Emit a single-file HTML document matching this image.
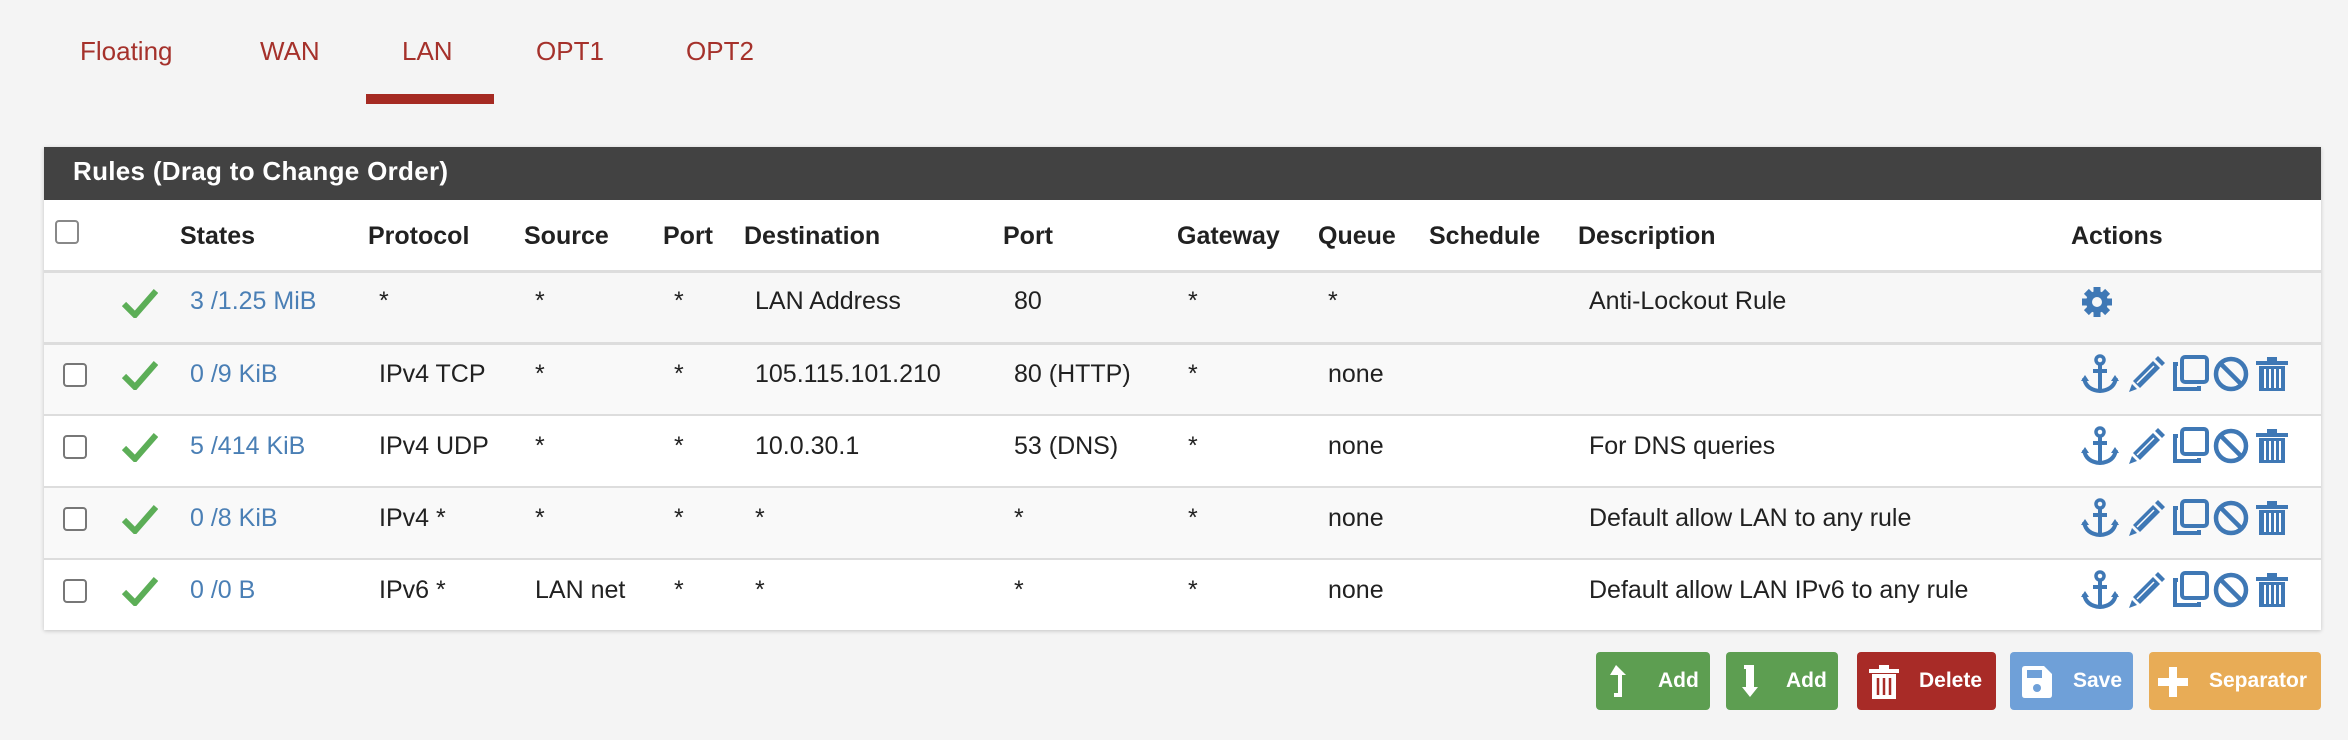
<!DOCTYPE html>
<html><head><meta charset="utf-8"><style>
*{margin:0;padding:0;box-sizing:border-box}
body{width:2348px;height:740px;background:#f4f4f4;font-family:"Liberation Sans",sans-serif;position:relative;overflow:hidden;color:#212121}
.a{position:absolute;white-space:nowrap}
.tab{color:#a5312b;font-size:26px;top:36px}
.panel{position:absolute;left:44px;top:147px;width:2277px;height:483px;background:#fff;box-shadow:0 1px 4px rgba(0,0,0,.2)}
.ph{position:absolute;left:0;top:0;width:100%;height:53px;background:#424242;color:#fff;font-weight:bold;font-size:26px;padding:9px 0 0 29px;letter-spacing:.3px}
.row{position:absolute;left:0;width:100%;border-top:2px solid #ddd}
.th{font-weight:bold;font-size:25px;top:222px}
.td{font-size:25px}
.lnk{color:#4a7fb5}
.cb{position:absolute;width:24px;height:24px;border:2px solid #777;border-radius:4px;background:#fff}
.btn{position:absolute;top:652px;height:58px;border-radius:4px;color:#fff;font-size:21px;font-weight:bold}
.btn span{position:absolute;top:17px}
</style></head><body>
<div class="a tab" style="left:80px">Floating</div>
<div class="a tab" style="left:260px">WAN</div>
<div class="a tab" style="left:402px">LAN</div>
<div class="a tab" style="left:536px">OPT1</div>
<div class="a tab" style="left:686px">OPT2</div>
<div class="a" style="left:366px;top:94px;width:128px;height:10px;background:#a52a22"></div>

<div class="panel">
<div class="ph">Rules (Drag to Change Order)</div>
<div class="row" style="top:123px;height:72px;background:#f7f7f7;border-top:3px solid #ddd"></div>
<div class="row" style="top:195px;height:72px;background:#f9f9f9;border-top:3px solid #ddd"></div>
<div class="row" style="top:267px;height:72px;background:#fff"></div>
<div class="row" style="top:339px;height:72px;background:#f9f9f9"></div>
<div class="row" style="top:411px;height:72px;background:#fff"></div>
</div>

<div class="cb" style="left:55px;top:220px;border-color:#888"></div>
<div class="a th" style="left:180px">States</div>
<div class="a th" style="left:368px">Protocol</div>
<div class="a th" style="left:524px">Source</div>
<div class="a th" style="left:663px">Port</div>
<div class="a th" style="left:744px">Destination</div>
<div class="a th" style="left:1003px">Port</div>
<div class="a th" style="left:1177px">Gateway</div>
<div class="a th" style="left:1318px">Queue</div>
<div class="a th" style="left:1429px">Schedule</div>
<div class="a th" style="left:1578px">Description</div>
<div class="a th" style="left:2071px">Actions</div>

<svg width="0" height="0" style="position:absolute"><defs>
<symbol id="chk" viewBox="0 0 36 30"><path d="M2 16 L13 27 L34 3" fill="none" stroke="#5cae57" stroke-width="6"/></symbol>
<symbol id="anc" viewBox="0 0 40 40"><circle cx="20" cy="6" r="4" fill="none" stroke="#3f78b5" stroke-width="3.5"/><path d="M20 10 V37 M13 17 H27 M4 24 Q6 36 20 37 Q34 36 36 24" fill="none" stroke="#3f78b5" stroke-width="4"/><path d="M1 27 L5 21 L9 27Z M31 27 L35 21 L39 27Z" fill="#3f78b5"/></symbol>
<symbol id="pen" viewBox="0 0 40 40"><path d="M7 27 L27 7 L34 14 L14 34Z" fill="#3f78b5"/><path d="M29 5 L32 2 L39 9 L36 12Z" fill="#3f78b5"/><path d="M6 30 L11 35 L3 38Z" fill="#3f78b5"/><path d="M11 29 L28 12" stroke="#fff" stroke-width="1.5"/></symbol>
<symbol id="cpy" viewBox="0 0 40 40"><rect x="12" y="3" width="25" height="25" rx="3" fill="none" stroke="#3f78b5" stroke-width="4"/><path d="M8 10 H5 V35 H29 V32" fill="none" stroke="#3f78b5" stroke-width="4"/></symbol>
<symbol id="ban" viewBox="0 0 40 40"><circle cx="20" cy="20" r="15" fill="none" stroke="#3f78b5" stroke-width="4.5"/><path d="M10 10 L30 30" stroke="#3f78b5" stroke-width="4.5"/></symbol>
<symbol id="trs" viewBox="0 0 40 40"><path d="M4 7 H36 V11 H4Z M15 3 H25 V7 H15Z" fill="#3f78b5"/><path d="M7 12 H33 V37 H7Z" fill="#3f78b5"/><path d="M13 15 V34 M18 15 V34 M23 15 V34 M28 15 V34" stroke="#fff" stroke-width="2"/></symbol>
</defs></svg>

<svg class="a" style="left:122px;top:288px" width="36" height="30"><use href="#chk"/></svg>
<div class="a td lnk" style="left:190px;top:287px">3 /1.25 MiB</div>
<div class="a td" style="left:379px;top:287px">*</div>
<div class="a td" style="left:535px;top:287px">*</div>
<div class="a td" style="left:674px;top:287px">*</div>
<div class="a td" style="left:755px;top:287px">LAN Address</div>
<div class="a td" style="left:1014px;top:287px">80</div>
<div class="a td" style="left:1188px;top:287px">*</div>
<div class="a td" style="left:1328px;top:287px">*</div>
<div class="a td" style="left:1589px;top:287px">Anti-Lockout Rule</div>
<svg class="a" style="left:2080px;top:285px" width="34" height="34" viewBox="0 0 34 34"><g fill="#3f78b5"><circle cx="17" cy="17" r="11"/><g stroke="#3f78b5" stroke-width="7"><path d="M17 2V32M2 17H32M6.4 6.4L27.6 27.6M27.6 6.4L6.4 27.6"/></g></g><circle cx="17" cy="17" r="5" fill="#f7f7f7"/></svg>

<div class="cb" style="left:63px;top:363px"></div>
<svg class="a" style="left:122px;top:360px" width="36" height="30"><use href="#chk"/></svg>
<div class="a td lnk" style="left:190px;top:360px">0 /9 KiB</div>
<div class="a td" style="left:379px;top:360px">IPv4 TCP</div>
<div class="a td" style="left:535px;top:360px">*</div>
<div class="a td" style="left:674px;top:360px">*</div>
<div class="a td" style="left:755px;top:360px">105.115.101.210</div>
<div class="a td" style="left:1014px;top:360px">80 (HTTP)</div>
<div class="a td" style="left:1188px;top:360px">*</div>
<div class="a td" style="left:1328px;top:360px">none</div>

<div class="cb" style="left:63px;top:435px"></div>
<svg class="a" style="left:122px;top:432px" width="36" height="30"><use href="#chk"/></svg>
<div class="a td lnk" style="left:190px;top:432px">5 /414 KiB</div>
<div class="a td" style="left:379px;top:432px">IPv4 UDP</div>
<div class="a td" style="left:535px;top:432px">*</div>
<div class="a td" style="left:674px;top:432px">*</div>
<div class="a td" style="left:755px;top:432px">10.0.30.1</div>
<div class="a td" style="left:1014px;top:432px">53 (DNS)</div>
<div class="a td" style="left:1188px;top:432px">*</div>
<div class="a td" style="left:1328px;top:432px">none</div>
<div class="a td" style="left:1589px;top:432px">For DNS queries</div>

<div class="cb" style="left:63px;top:507px"></div>
<svg class="a" style="left:122px;top:504px" width="36" height="30"><use href="#chk"/></svg>
<div class="a td lnk" style="left:190px;top:504px">0 /8 KiB</div>
<div class="a td" style="left:379px;top:504px">IPv4 *</div>
<div class="a td" style="left:535px;top:504px">*</div>
<div class="a td" style="left:674px;top:504px">*</div>
<div class="a td" style="left:755px;top:504px">*</div>
<div class="a td" style="left:1014px;top:504px">*</div>
<div class="a td" style="left:1188px;top:504px">*</div>
<div class="a td" style="left:1328px;top:504px">none</div>
<div class="a td" style="left:1589px;top:504px">Default allow LAN to any rule</div>

<div class="cb" style="left:63px;top:579px"></div>
<svg class="a" style="left:122px;top:576px" width="36" height="30"><use href="#chk"/></svg>
<div class="a td lnk" style="left:190px;top:576px">0 /0 B</div>
<div class="a td" style="left:379px;top:576px">IPv6 *</div>
<div class="a td" style="left:535px;top:576px">LAN net</div>
<div class="a td" style="left:674px;top:576px">*</div>
<div class="a td" style="left:755px;top:576px">*</div>
<div class="a td" style="left:1014px;top:576px">*</div>
<div class="a td" style="left:1188px;top:576px">*</div>
<div class="a td" style="left:1328px;top:576px">none</div>
<div class="a td" style="left:1589px;top:576px">Default allow LAN IPv6 to any rule</div>

<div class="a" style="left:2080px;top:354px;height:40px">
<svg width="40" height="40" style="position:absolute;left:0"><use href="#anc"/></svg>
<svg width="40" height="40" style="position:absolute;left:46px"><use href="#pen"/></svg>
<svg width="40" height="40" style="position:absolute;left:90px"><use href="#cpy"/></svg>
<svg width="40" height="40" style="position:absolute;left:131px"><use href="#ban"/></svg>
<svg width="40" height="40" style="position:absolute;left:172px"><use href="#trs"/></svg>
</div>
<div class="a" style="left:2080px;top:426px;height:40px">
<svg width="40" height="40" style="position:absolute;left:0"><use href="#anc"/></svg>
<svg width="40" height="40" style="position:absolute;left:46px"><use href="#pen"/></svg>
<svg width="40" height="40" style="position:absolute;left:90px"><use href="#cpy"/></svg>
<svg width="40" height="40" style="position:absolute;left:131px"><use href="#ban"/></svg>
<svg width="40" height="40" style="position:absolute;left:172px"><use href="#trs"/></svg>
</div>
<div class="a" style="left:2080px;top:498px;height:40px">
<svg width="40" height="40" style="position:absolute;left:0"><use href="#anc"/></svg>
<svg width="40" height="40" style="position:absolute;left:46px"><use href="#pen"/></svg>
<svg width="40" height="40" style="position:absolute;left:90px"><use href="#cpy"/></svg>
<svg width="40" height="40" style="position:absolute;left:131px"><use href="#ban"/></svg>
<svg width="40" height="40" style="position:absolute;left:172px"><use href="#trs"/></svg>
</div>
<div class="a" style="left:2080px;top:570px;height:40px">
<svg width="40" height="40" style="position:absolute;left:0"><use href="#anc"/></svg>
<svg width="40" height="40" style="position:absolute;left:46px"><use href="#pen"/></svg>
<svg width="40" height="40" style="position:absolute;left:90px"><use href="#cpy"/></svg>
<svg width="40" height="40" style="position:absolute;left:131px"><use href="#ban"/></svg>
<svg width="40" height="40" style="position:absolute;left:172px"><use href="#trs"/></svg>
</div>

<div class="btn" style="left:1596px;width:114px;background:#5d9e51">
<svg style="position:absolute;left:12px;top:13px" width="26" height="34" viewBox="0 0 26 34"><path d="M4 0 L14 10 H10 V32 H2 V28 H6 V10 H-2Z" fill="#fff" transform="translate(4,0)"/></svg>
<span style="left:62px">Add</span></div>
<div class="btn" style="left:1726px;width:112px;background:#5d9e51">
<svg style="position:absolute;left:12px;top:13px" width="26" height="34" viewBox="0 0 26 34"><path d="M0 0 H10 V22 H14 L6 32 L-2 22 H2 V4 H0Z" fill="#fff" transform="translate(6,0)"/></svg>
<span style="left:60px">Add</span></div>
<div class="btn" style="left:1857px;width:139px;background:#a82b27">
<svg style="position:absolute;left:12px;top:13px" width="30" height="34" viewBox="0 0 30 34"><path d="M0 4 H30 V8 H0Z M10 0 H20 V4 H10Z M3 9 H27 V34 H3Z" fill="#fff"/><path d="M9 13 V30 M15 13 V30 M21 13 V30" stroke="#a82b27" stroke-width="2.5"/></svg>
<span style="left:62px">Delete</span></div>
<div class="btn" style="left:2010px;width:123px;background:#6fa0d8">
<svg style="position:absolute;left:12px;top:14px" width="30" height="32" viewBox="0 0 30 32"><path d="M0 3 Q0 0 3 0 H22 L30 8 V29 Q30 32 27 32 H3 Q0 32 0 29Z" fill="#fff"/><rect x="5" y="4" width="15" height="8" fill="#6fa0d8"/><circle cx="15" cy="22" r="4" fill="#6fa0d8"/></svg>
<span style="left:63px">Save</span></div>
<div class="btn" style="left:2149px;width:172px;background:#e8ac56">
<svg style="position:absolute;left:9px;top:15px" width="30" height="30" viewBox="0 0 30 30"><path d="M11 0 H19 V11 H30 V19 H19 V30 H11 V19 H0 V11 H11Z" fill="#fff"/></svg>
<span style="left:60px">Separator</span></div>
</body></html>
